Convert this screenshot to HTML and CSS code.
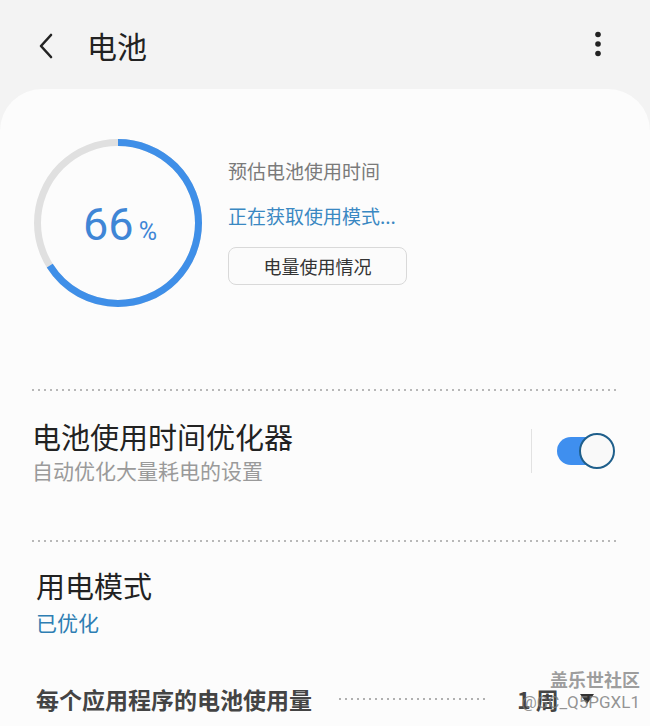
FILE: index.html
```html
<!DOCTYPE html>
<html lang="zh">
<head>
<meta charset="utf-8">
<link rel="stylesheet" href="styles.css">
</head>
<body>
<div class="screen">
  <header class="topbar">
    <svg class="back" width="20" height="26" viewBox="0 0 20 26"><path d="M14 2 L4 13 L14 24" fill="none" stroke="#222" stroke-width="2.6" stroke-linecap="round" stroke-linejoin="round"/></svg>
    <h1 class="title">电池</h1>
    <svg class="more" width="8" height="26" viewBox="0 0 8 26"><circle cx="4" cy="3.5" r="2.8" fill="#222"/><circle cx="4" cy="13" r="2.8" fill="#222"/><circle cx="4" cy="22.5" r="2.8" fill="#222"/></svg>
  </header>
  <main class="card">
    <section class="summary">
      <div class="gauge">
        <svg width="170" height="170" viewBox="0 0 170 170">
          <circle cx="85" cy="85" r="80.5" fill="none" stroke="#e0e0e0" stroke-width="7"/>
          <circle cx="85" cy="85" r="80.5" fill="none" stroke="#3f8fe8" stroke-width="7" stroke-dasharray="333.8 505.8" transform="rotate(-90 85 85)"/>
        </svg>
        <div class="pct"><span class="num">66</span><span class="sign">%</span></div>
      </div>
      <div class="info">
        <div class="est">预估电池使用时间</div>
        <div class="fetch">正在获取使用模式...</div>
        <button class="usage">电量使用情况</button>
      </div>
    </section>
    <div class="dots"></div>
    <section class="row opt">
      <div class="texts">
        <div class="main">电池使用时间优化器</div>
        <div class="sub">自动优化大量耗电的设置</div>
      </div>
      <div class="vsep"></div>
      <div class="toggle"><div class="thumb"></div></div>
    </section>
    <div class="dots"></div>
    <section class="mode">
      <div class="main">用电模式</div>
      <div class="val">已优化</div>
    </section>
    <section class="perapp">
      <div class="label">每个应用程序的电池使用量</div>
      <div class="leader"></div>
      <div class="week">1 周</div>
      <svg class="caret" width="16" height="12" viewBox="0 0 16 12"><path d="M1 1 H15 L8 11 Z" fill="#333"/></svg>
      <div class="wm"><div class="wm1">盖乐世社区</div><div class="wm2">@GC_Q5PGXL1</div></div>
    </section>
  </main>
</div>
</body>
</html>
```
FILE: styles.css
```css
* { box-sizing: border-box; }
html, body { margin: 0; padding: 0; }
body {
  width: 650px;
  height: 726px;
  overflow: hidden;
  background: #f3f3f3;
  font-family: "Noto Sans CJK SC", "Noto Sans", sans-serif;
  color: #222;
}
.screen { display: flex; flex-direction: column; height: 726px; }
.topbar {
  flex-shrink: 0;
  height: 89px;
  display: flex;
  align-items: center;
  padding: 0 0 0 37px;
}
.back { margin-top: 2px; }
.title {
  margin: 0 0 0 30px;
  font-size: 30px;
  font-weight: 400;
  color: #222;
  line-height: 1;
}
.more { margin-left: auto; margin-right: 48px; margin-top: -1px; }
.card {
  flex: 1;
  min-height: 0;
  overflow: hidden;
  background: #fcfcfc;
  border-radius: 42px 42px 0 0;
  padding: 0 32px 0 30px;
  display: flex;
  flex-direction: column;
}
.card > * { flex-shrink: 0; }
.summary {
  display: flex;
  align-items: flex-start;
  padding-top: 49px;
  height: 300px;
}
.gauge {
  width: 170px;
  height: 170px;
  position: relative;
  margin-left: 3px;
}
.gauge svg { display: block; }
.pct {
  position: absolute;
  inset: 0;
  display: flex;
  align-items: baseline;
  justify-content: center;
  padding-top: 64px;
  color: #3f86d6;
  font-family: "Roboto", "Noto Sans", sans-serif;
  margin-left: 4px;
}
.num { font-size: 45px; line-height: 1; }
.sign { font-size: 25px; margin-left: 5px; line-height: 1; }
.info {
  margin-left: 25px;
  padding-top: 20px;
  display: flex;
  flex-direction: column;
  align-items: flex-start;
}
.est { font-size: 19px; color: #7a7a7a; line-height: 26px; }
.fetch { font-size: 19px; color: #3a88c2; line-height: 26px; margin-top: 19px; }
.usage {
  margin-top: 18px;
  width: 179px;
  height: 38px;
  border: 1.5px solid #d9d9d9;
  border-radius: 8px;
  background: #fbfbfb;
  font-family: inherit;
  font-size: 18px;
  color: #333;
  padding: 0;
}
.dots {
  height: 2px;
  background-image: radial-gradient(circle, #b8b8b8 0.9px, transparent 1.2px);
  background-size: 6px 2px;
  background-repeat: repeat-x;
}
.row.opt {
  display: flex;
  align-items: center;
  height: 149px;
  padding-left: 2px;
  padding-bottom: 30px;
}
.texts { flex: 1; }
.main { font-size: 29px; color: #222; line-height: 38px; }
.sub { font-size: 21px; color: #9a9a9a; line-height: 30px; }
.vsep { width: 1px; height: 44px; background: #e2e2e2; margin-right: 25px; }
.toggle {
  width: 58px;
  height: 36px;
  position: relative;
  margin-right: 3px;
}
.toggle::before {
  content: "";
  position: absolute;
  left: 0; top: 4px;
  width: 48px; height: 28px;
  border-radius: 14px;
  background: #3f8fef;
}
.thumb {
  position: absolute;
  right: 0; top: 0;
  width: 36px; height: 36px;
  border-radius: 50%;
  background: #f9f9f9;
  border: 2px solid #1f5f8b;
}
.mode {
  padding: 24px 0 0 6px;
  height: 130px;
}
.val { font-size: 21px; color: #2e7eb3; line-height: 28px; margin-top: 4px; }
.perapp {
  display: flex;
  align-items: center;
  padding-left: 6px;
  height: 54px;
  position: relative;
}
.label { font-size: 23px; font-weight: 700; color: #444; }
.leader {
  width: 152px;
  height: 2px;
  margin-left: 25px;
  background-image: radial-gradient(circle, #b0b0b0 0.8px, transparent 1.1px);
  background-size: 6px 2px;
  background-repeat: repeat-x;
}
.week { margin-left: 28px; font-size: 23px; font-weight: 700; color: #444; }
.caret { margin-left: 20px; }
.wm {
  position: absolute;
  right: -22px;
  top: -2px;
  text-align: right;
  line-height: 1;
}
.wm1 { font-size: 18px; font-weight: 700; color: rgba(140,140,140,0.85); }
.wm2 { font-size: 17px; margin-top: 6px; font-family: "Roboto", sans-serif; color: rgba(120,120,120,0.8); }
```
